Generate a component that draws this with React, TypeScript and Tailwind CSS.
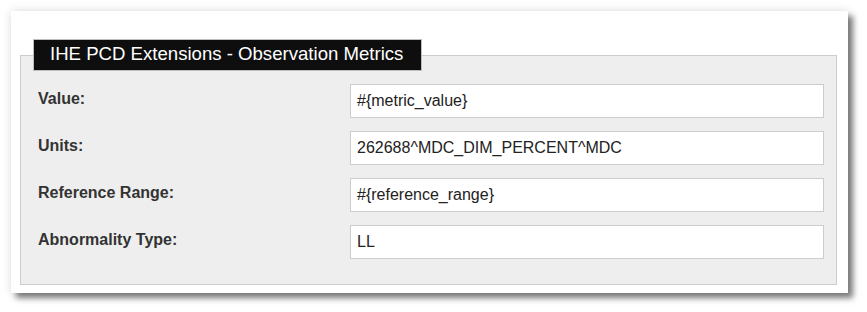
import React from "react";

const rows = [
  { label: "Value:", value: "#{metric_value}" },
  { label: "Units:", value: "262688^MDC_DIM_PERCENT^MDC" },
  { label: "Reference Range:", value: "#{reference_range}" },
  { label: "Abnormality Type:", value: "LL" },
];

export default function App() {
  return (
    <div className="min-h-[312px] bg-white p-[11px] font-['Liberation_Sans',Arial,sans-serif]">
      {/* Card */}
      <div className="w-[837px] h-[282px] bg-white pt-[28px] pl-[9px] pr-[11px] pb-[8px] shadow-[0_0_10px_rgba(0,0,0,0.12),5px_5px_6px_rgba(0,0,0,0.5)]">
        <fieldset className="border border-[#cccccc] bg-[#eeeeee] px-[12px] pt-[13px] pb-[25px]">
          <legend className="bg-[#0e0e0e] border border-[#bdbdbd] text-white text-[18.6px] leading-[28px] pb-[2px] pl-[16px] pr-[18px]">
            IHE PCD Extensions - Observation Metrics
          </legend>

          <div className="flex flex-col gap-[13px]">
            {rows.map((row) => (
              <div key={row.label} className="flex items-start">
                <div className="w-[317px] pl-[5px] mt-[5px] text-[16px] leading-[20px] font-bold text-[#333333]">
                  {row.label}
                </div>
                <div className="flex-1 h-[34px] bg-white border border-[#cccccc] px-[6px] text-[16px] leading-[32px] text-[#222222]">
                  {row.value}
                </div>
              </div>
            ))}
          </div>
        </fieldset>
      </div>
    </div>
  );
}
